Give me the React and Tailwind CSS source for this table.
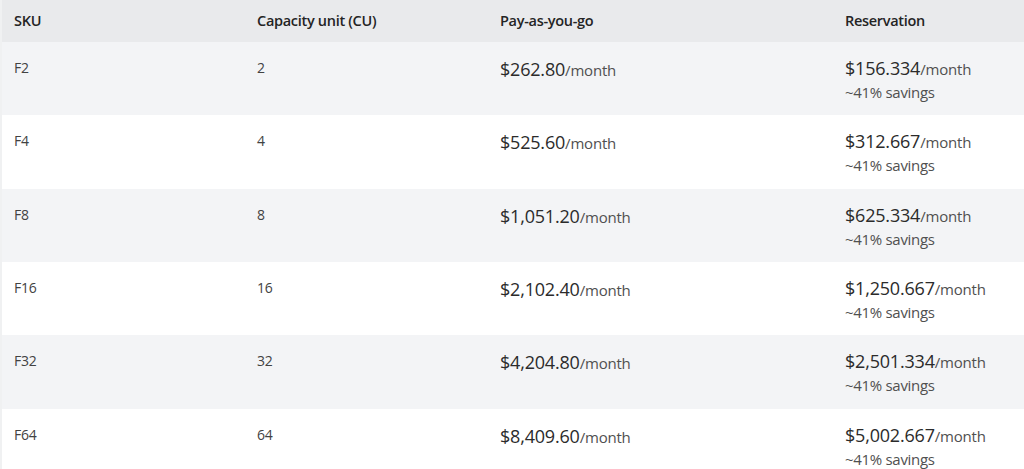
const rows = [
  { sku: "F2", cu: "2", payg: "$262.80", res: "$156.334" },
  { sku: "F4", cu: "4", payg: "$525.60", res: "$312.667" },
  { sku: "F8", cu: "8", payg: "$1,051.20", res: "$625.334" },
  { sku: "F16", cu: "16", payg: "$2,102.40", res: "$1,250.667" },
  { sku: "F32", cu: "32", payg: "$4,204.80", res: "$2,501.334" },
  { sku: "F64", cu: "64", payg: "$8,409.60", res: "$5,002.667" },
];

const cols = "grid grid-cols-[243px_243px_345px_1fr]";

const App = () => {
  return (
    <div className="w-[1024px] h-[469px] overflow-hidden bg-white border-l-2 border-[#f0f1f2] font-['Open_Sans',sans-serif] text-[#242424]">
      <div className={`${cols} h-[42px] items-center bg-[#e9eaec] text-[14.5px] font-semibold tracking-[-0.3px]`}>
        <div className="pl-3">SKU</div>
        <div className="pl-3">Capacity unit (CU)</div>
        <div className="pl-3">Pay-as-you-go</div>
        <div className="pl-3">Reservation</div>
      </div>
      {rows.map((r, i) => (
        <div key={r.sku} className={`${cols} h-[73.33px] ${i % 2 === 0 ? "bg-[#f3f4f6]" : "bg-white"}`}>
          <div className="pl-3 pt-[15px] text-[14px] text-[#424242] tracking-[-0.2px]">{r.sku}</div>
          <div className="pl-3 pt-[15px] text-[14px] text-[#424242] tracking-[-0.2px]">{r.cu}</div>
          <div className="pl-3 pt-[14px] tracking-[-0.2px]">
            <span className="text-[18px] text-[#2b2b2b]">{r.payg}</span>
            <span className="text-[15px] text-[#505050]">/month</span>
          </div>
          <div className="pl-3 pt-[14px] tracking-[-0.2px]">
            <div className="leading-[25px]">
              <span className="text-[18px] text-[#2b2b2b]">{r.res}</span>
              <span className="text-[15px] text-[#505050]">/month</span>
            </div>
            <div className="text-[15px] text-[#505050] leading-[20px] tracking-[-0.3px]">~41% savings</div>
          </div>
        </div>
      ))}
    </div>
  );
};

export default App;
